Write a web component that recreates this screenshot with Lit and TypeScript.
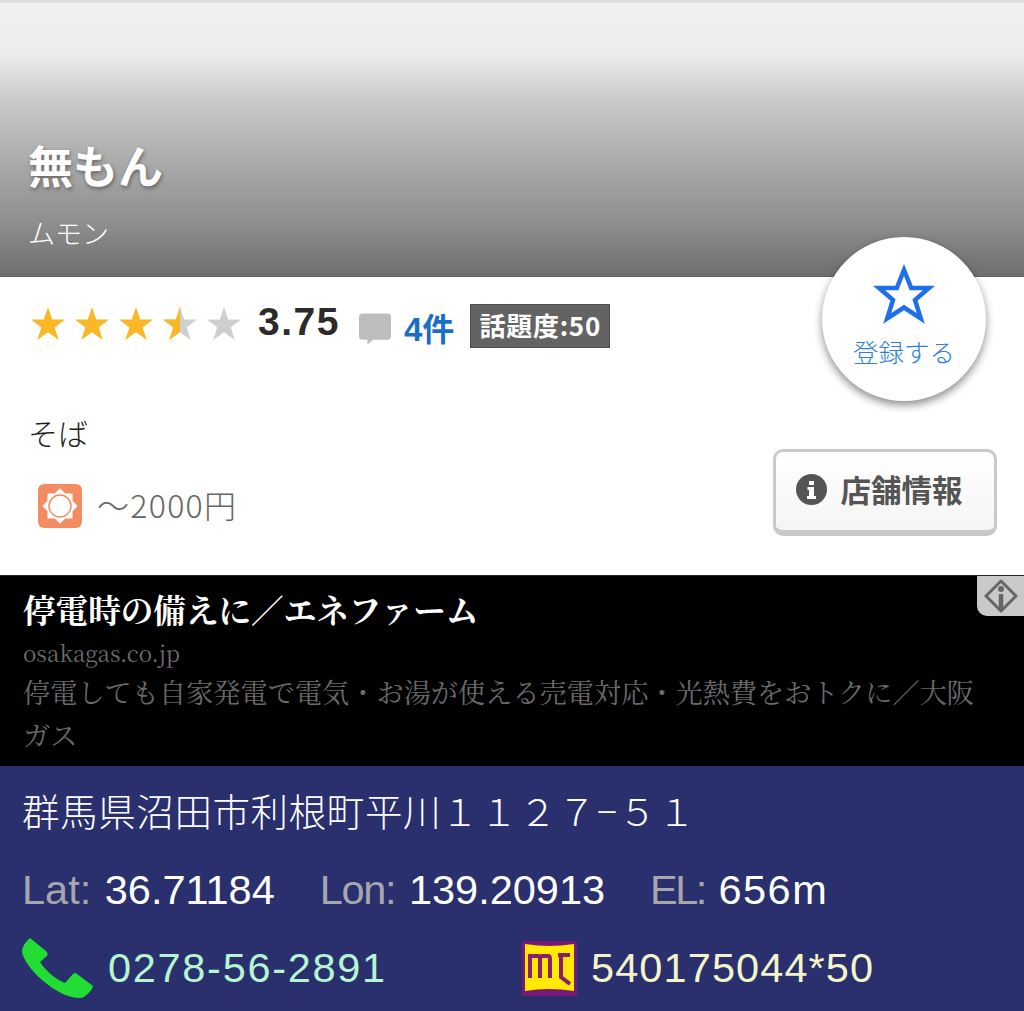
import { LitElement, html, css } from "lit";
import { customElement } from "lit/decorators.js";

const STAR = "M17 0 L21.2 12.6 L34 12.6 L23.700 20.400 L27.800 33 L17 25.200 L6.200 33 L10.300 20.400 L0 12.600 L12.800 12.600 Z";

@customElement("app-root")
export class AppRoot extends LitElement {
  static styles = css`
    :host { display: block; width: 1024px; height: 1011px; overflow: hidden; position: relative; font-family: "Noto Sans CJK JP", "Liberation Sans", sans-serif; background: #fff; }
    .hero { height: 277px; box-sizing: border-box; border-top: 3px solid #dedede; border-bottom: 1px solid #666; padding: 134px 0 0 28px;
      background: linear-gradient(#f1f0f0 0, #eeeded 50px, #c9c8c8 100px, #b0afaf 150px, #8f8e8e 220px, #6f6e6e 274px); color: #fff; }
    .name { font-size: 45px; font-weight: 700; line-height: 56px; text-shadow: 1px 2px 4px rgba(0,0,0,.4); }
    .kana { font-size: 27px; font-weight: 300; line-height: 36px; margin-top: 22px; }
    .info { height: 298px; box-sizing: border-box; padding: 27px 27px 0 28px; display: flex; flex-direction: column; }
    .rating { display: flex; align-items: flex-start; height: 44px; }
    .stars { display: flex; gap: 10px; margin: 3px 0 0 3px; }
    .stars svg { width: 34px; height: 33px; display: block; }
    .score { font: 700 39px/38px "Liberation Sans", sans-serif; letter-spacing: 1.500px; color: #2b2b2b; margin: -1px 0 0 17px; }
    .bubble { width: 32px; height: 32px; margin: 9px 0 0 19px; }
    .count { font-size: 32px; font-weight: 700; line-height: 40px; color: #1a6fc4; margin: 3px 0 0 13px; white-space: nowrap; }
    .count b { font-family: "Liberation Sans", sans-serif; font-size: 33px; }
    .badge { margin: 0 0 0 16px; width: 140px; height: 44px; box-sizing: border-box; background: #636363; border: 1px solid #4c4c4c; color: #fff; font-size: 26px; font-weight: 700; letter-spacing: .7px; display: flex; align-items: center; justify-content: center; line-height: 1; white-space: nowrap; padding-bottom: 3px; }
    .genre { font-size: 30px; font-weight: 300; line-height: 40px; color: #1b1b1b; margin-top: 64px; }
    .row { display: flex; justify-content: space-between; align-items: flex-start; }
    .price { display: flex; align-items: center; gap: 15px; margin: 32px 0 0 10px; font-size: 32px; font-weight: 300; letter-spacing: 1.300px; color: #666; line-height: 44px; }
    .price svg { width: 44px; height: 44px; display: block; }
    .price span { margin-top: -4px; }
    .shop { margin-top: -3px; width: 224px; height: 87px; box-sizing: border-box; border: 3px solid #c9c9c9; border-bottom-width: 6px; border-radius: 10px; background: linear-gradient(#fff, #f5f5f5); display: flex; align-items: center; justify-content: center; gap: 14px; font-size: 30.500px; font-weight: 700; color: #555; padding: 0 12px 4px 0; white-space: nowrap; }
    .shop svg { width: 31px; height: 31px; }
    .fab { position: absolute; left: 822px; top: 237px; width: 164px; height: 164px; border-radius: 50%; background: #fff; box-shadow: 0 4px 8px rgba(0,0,0,.45); display: flex; flex-direction: column; align-items: center; color: #2a7de1; font-size: 25.500px; font-weight: 300; white-space: nowrap; }
    .fab svg { width: 62px; height: 60px; margin-top: 27px; display: block; }
    .fab span { line-height: 34px; margin-top: 10px; }
    .ad { height: 191px; box-sizing: border-box; background: #000; border-top: 1px solid #222; position: relative; padding: 11px 30px 0 23px; font-family: "Noto Serif CJK JP", "Liberation Serif", "Noto Sans CJK JP", serif; color: #6a6a6a; }
    .ad h2 { margin: 0; font-size: 32.600px; font-weight: 700; line-height: 44px; color: #fff; white-space: nowrap; }
    .ad .dom { font-size: 22.400px; line-height: 34px; margin-top: 4px; }
    .ad p { margin: 0; font-size: 27.200px; line-height: 43px; margin-top: 1px; }
    .adinfo { position: absolute; right: 0; top: 0; width: 47px; height: 40px; background: #c9c9c9; border-bottom-left-radius: 10px; display: flex; align-items: center; justify-content: center; }
    .adinfo svg { width: 38px; height: 36px; }
    .geo { height: 245px; background: #2a2f6e; color: #fff; box-sizing: border-box; padding: 22px 0 0 22px; font-family: "Liberation Sans", "Noto Sans CJK JP", sans-serif; }
    .addr { font-size: 37.500px; line-height: 44px; letter-spacing: .6px; white-space: nowrap; font-family: "Noto Sans CJK JP", sans-serif; font-weight: 300; }
    .addr span { letter-spacing: 1.500px; }
    .coords { display: flex; font-size: 41.500px; line-height: 46px; margin-top: 35px; white-space: nowrap; gap: 45px; word-spacing: 2px; }
    .coords i { font-style: normal; color: #a5a6ae; }
    .coords .lon { letter-spacing: -1.300px; }
    .coords .el { letter-spacing: -2.500px; }
    .coords .wide { letter-spacing: 1.500px; }
    .contact { display: flex; align-items: center; margin-top: 25px; font-size: 41.500px; white-space: nowrap; }
    .phone { color: #b5f5cf; display: flex; align-items: center; gap: 15px; width: 500px; letter-spacing: 1.700px; }
    .phone svg { width: 71px; height: 60px; }
    .code { color: #f3f5c8; display: flex; align-items: center; gap: 14px; letter-spacing: 1.100px; }
    .code svg { width: 55px; height: 55px; }
  `;

  private star(kind: "full" | "half" | "empty") {
    if (kind === "half") {
      return html`<svg viewBox="0 0 34 33">
        <path d=${STAR} fill="#cfcfcf"></path>
        <path d="M17 0 L17 25.200 L6.200 33 L10.300 20.400 L0 12.600 L12.800 12.600 Z" fill="#fbb725"></path>
      </svg>`;
    }
    return html`<svg viewBox="0 0 34 33"><path d=${STAR} fill=${kind === "full" ? "#fbb725" : "#cfcfcf"}></path></svg>`;
  }

  render() {
    return html`
      <section class="hero">
        <div class="name">無もん</div>
        <div class="kana">ムモン</div>
      </section>
      <section class="info">
        <div class="rating">
          <div class="stars">${this.star("full")}${this.star("full")}${this.star("full")}${this.star("half")}${this.star("empty")}</div>
          <div class="score">3.75</div>
          <svg class="bubble" viewBox="0 0 34 33"><path d="M4 0 H30 a4 4 0 0 1 4 4 V24 a4 4 0 0 1 -4 4 H15 L9 33 V28 H4 a4 4 0 0 1 -4 -4 V4 a4 4 0 0 1 4 -4 Z" fill="#bdbdbd"></path></svg>
          <div class="count"><b>4</b>件</div>
          <div class="badge">話題度:50</div>
        </div>
        <div class="genre">そば</div>
        <div class="row">
          <div class="price">
            <svg viewBox="0 0 44 44">
              <rect width="44" height="44" rx="6" fill="#f48c62"></rect>
              <rect x="9.500" y="9.500" width="25" height="25" fill="#fff"></rect>
              <rect x="9.500" y="9.500" width="25" height="25" fill="#fff" transform="rotate(45 22 22)"></rect>
              <circle cx="22" cy="22" r="11" fill="#fff" stroke="#f48c62" stroke-width="1.500"></circle>
            </svg>
            <span>～2000円</span>
          </div>
          <div class="shop">
            <svg viewBox="0 0 31 31"><circle cx="15.500" cy="15.500" r="15.500" fill="#555"></circle><path d="M13 7h5v4h-5z M11.500 13h6.500v9h2v3h-9v-3h2v-6h-1.500z" fill="#fff"></path></svg>
            店舗情報
          </div>
        </div>
      </section>
      <div class="fab">
        <svg viewBox="0 0 62 60"><path d="M31 6 L38.200 24 L56 24 L42 36 L47.800 54.500 L31 43.500 L14.200 54.500 L20 36 L6 24 L23.800 24 Z" fill="none" stroke="#1f6fe8" stroke-width="4.500" stroke-linejoin="miter"></path></svg>
        <span>登録する</span>
      </div>
      <section class="ad">
        <h2>停電時の備えに／エネファーム</h2>
        <div class="dom">osakagas.co.jp</div>
        <p>停電しても自家発電で電気・お湯が使える売電対応・光熱費をおトクに／大阪ガス</p>
        <div class="adinfo">
          <svg viewBox="0 0 38 36"><path d="M19 3 L34 18 L19 33 L4 18 Z" fill="none" stroke="#666" stroke-width="3" stroke-linejoin="round"></path><circle cx="19" cy="11" r="3" fill="#666"></circle><path d="M19 16 V33" stroke="#666" stroke-width="4.500"></path></svg>
        </div>
      </section>
      <section class="geo">
        <div class="addr">群馬県沼田市利根町平川<span>１１２７−５１</span></div>
        <div class="coords">
          <span><i>Lat:</i> 36.71184</span>
          <span><i class="lon">Lon:</i> 139.20913</span>
          <span><i class="el">EL:</i> <span class="wide">656m</span></span>
        </div>
        <div class="contact">
          <div class="phone">
            <svg viewBox="0 0 71 60"><path d="M8 0 L25 14 Q26 16 25 18 L18 24 C23 32 33 41 43 45 L51 36 Q53 34 55 36 L71 48 Q70 53 62 59 Q58 61 50 59 C32 55 4 32 0 14 Q0 7 8 0 Z" fill="#22dd33"></path></svg>
            <span>0278-56-2891</span>
          </div>
          <div class="code">
            <svg viewBox="0 0 55 55">
              <rect x="0" y="0" width="55" height="55" fill="#7a1a78"></rect>
              <path d="M3 3 Q27 7 52 3 V50 Q27 46 3 50 Z" fill="#ffea00"></path>
              <path d="M8 37 V15 H16 Q18 15 18 18 V37 M18 18 Q18 15 21 15 H26 Q28 15 28 18 V37 M36 14 H48 M39 14 V36 L48 43" fill="none" stroke="#8a1f70" stroke-width="4"></path>
            </svg>
            <span>540175044*50</span>
          </div>
        </div>
      </section>
    `;
  }
}
